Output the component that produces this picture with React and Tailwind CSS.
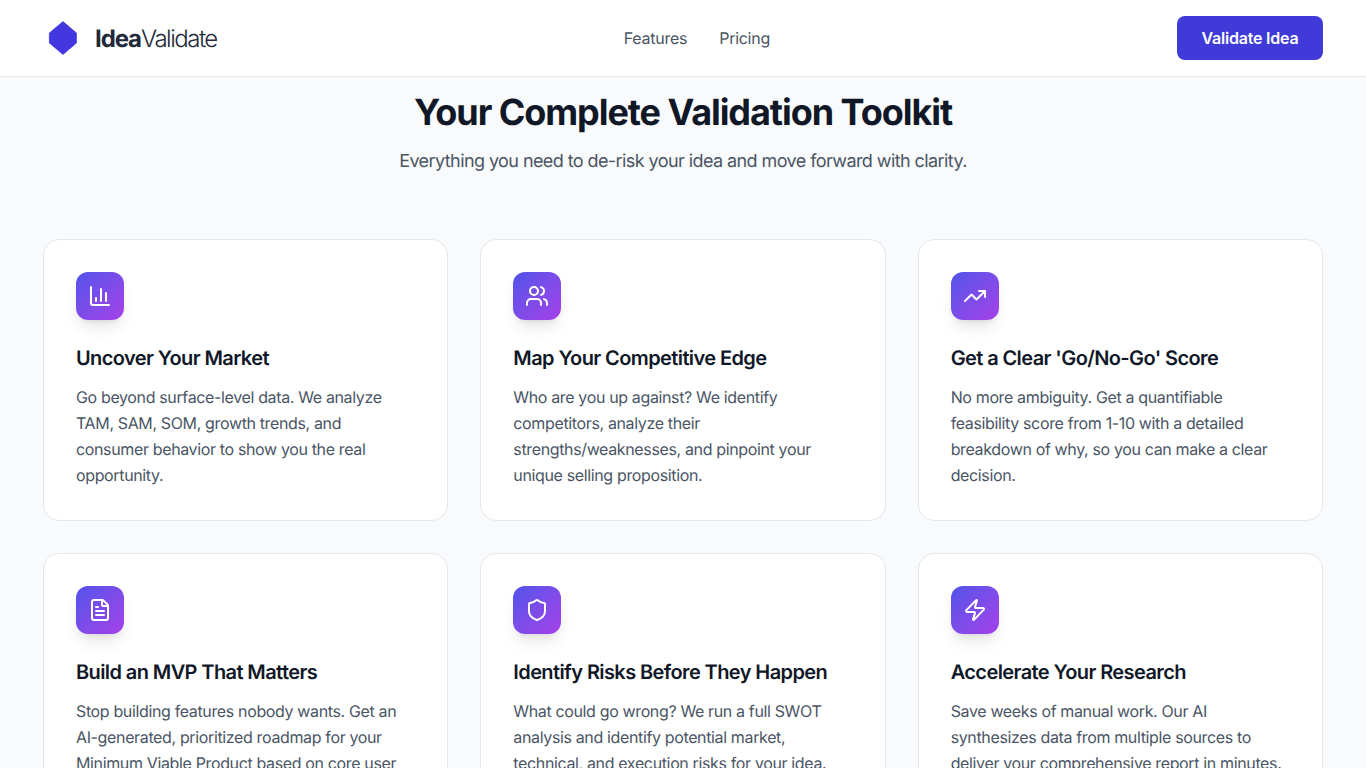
import React from "react";
import { ChartColumn, Users, TrendingUp, FileText, Shield, Zap } from "lucide-react";

const cards = [
  { icon: ChartColumn, title: "Uncover Your Market", text: "Go beyond surface-level data. We analyze TAM, SAM, SOM, growth trends, and consumer behavior to show you the real opportunity." },
  { icon: Users, title: "Map Your Competitive Edge", text: "Who are you up against? We identify competitors, analyze their strengths/weaknesses, and pinpoint your unique selling proposition." },
  { icon: TrendingUp, title: "Get a Clear 'Go/No-Go' Score", text: "No more ambiguity. Get a quantifiable feasibility score from 1-10 with a detailed breakdown of why, so you can make a clear decision." },
  { icon: FileText, title: "Build an MVP That Matters", text: "Stop building features nobody wants. Get an AI-generated, prioritized roadmap for your Minimum Viable Product based on core user needs." },
  { icon: Shield, title: "Identify Risks Before They Happen", text: "What could go wrong? We run a full SWOT analysis and identify potential market, technical, and execution risks for your idea." },
  { icon: Zap, title: "Accelerate Your Research", text: "Save weeks of manual work. Our AI synthesizes data from multiple sources to deliver your comprehensive report in minutes." },
];

export default function App() {
  return (
    <div className="h-[768px] overflow-hidden bg-[#f9fafb] font-['Inter',sans-serif] [text-rendering:geometricPrecision]">
      <header className="h-[77px] border-b border-gray-200 bg-white">
        <div className="mx-auto flex h-[76px] w-[1280px] items-center justify-between">
          <div className="flex items-center gap-3">
            <svg className="h-10 w-10" viewBox="0 0 40 40">
              <path d="M20 3.6 L33.4 15 V25 L20 36.4 L6.4 25 V15 Z" fill="#4338e0" stroke="#4338e0" strokeWidth="0.8" strokeLinejoin="round" />
            </svg>
            <span className="pt-0.5 text-2xl text-gray-800">
              <span className="font-bold tracking-[-1.1px]">Idea</span>
              <span className="font-light tracking-[-1.5px]">Validate</span>
            </span>
          </div>
          <nav className="flex items-center gap-8 text-base tracking-[-0.27px] text-gray-600">
            <a>Features</a>
            <a>Pricing</a>
          </nav>
          <button className="h-11 w-[146px] rounded-lg bg-[#3f3ad8] text-base font-semibold tracking-[-0.2px] text-white">Validate Idea</button>
        </div>
      </header>
      <main className="mx-auto w-[1280px] pt-[15px]">
        <div className="text-center">
          <h2 className="text-4xl font-bold tracking-[-1.06px] text-gray-900">Your Complete Validation Toolkit</h2>
          <p className="mt-4 text-lg tracking-[-0.58px] text-gray-600">Everything you need to de-risk your idea and move forward with clarity.</p>
        </div>
        <div className="mt-[63px] grid grid-cols-3 gap-8">
          {cards.map(({ icon: Icon, title, text }) => (
            <div key={title} className="rounded-2xl border border-gray-200 bg-white p-8">
              <div className="mb-6 flex h-12 w-12 items-center justify-center rounded-xl bg-gradient-to-br from-[#4f52ea] to-[#a43fe8] text-white shadow-lg">
                <Icon size={24} strokeWidth={2} />
              </div>
              <h3 className="mb-3 text-xl font-semibold tracking-[-0.6px] text-gray-900">{title}</h3>
              <p className="leading-relaxed tracking-[-0.36px] text-gray-600">{text}</p>
            </div>
          ))}
        </div>
      </main>
    </div>
  );
}
